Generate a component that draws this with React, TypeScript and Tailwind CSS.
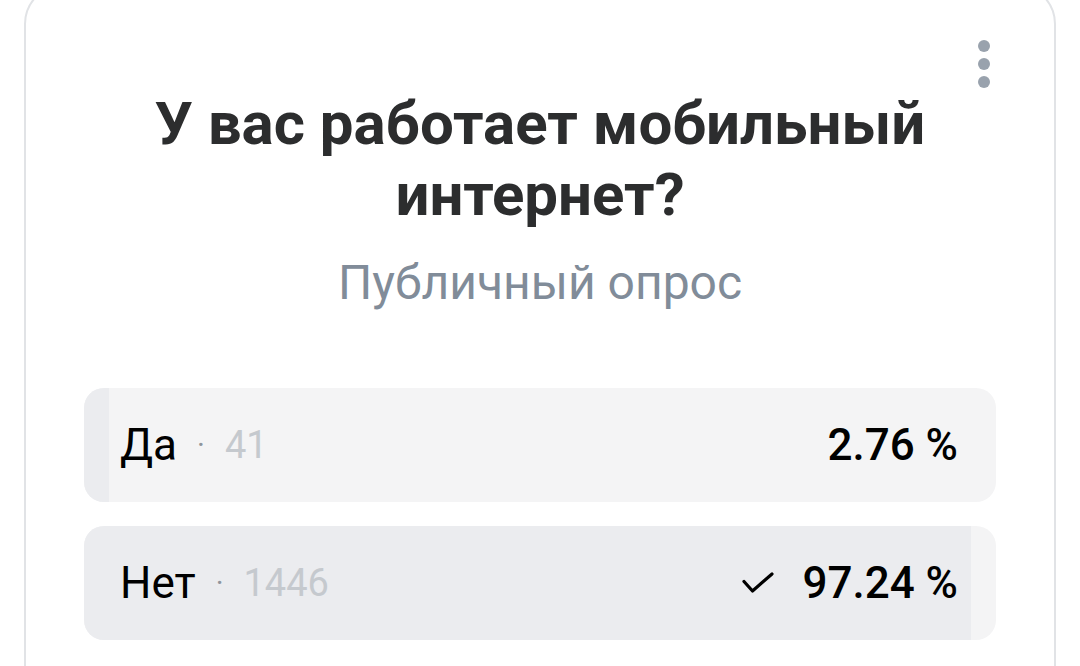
type Option = {
  label: string;
  votes: number;
  percent: number;
  chosen?: boolean;
};

const options: Option[] = [
  { label: 'Да', votes: 41, percent: 2.76 },
  { label: 'Нет', votes: 1446, percent: 97.24, chosen: true },
];

function CheckMark() {
  return (
    <svg width="32" height="22" viewBox="0 0 32 22" fill="none" className="shrink-0">
      <path d="M2 9.5 L10.5 19 L30 2" stroke="#000" strokeWidth="3.2" strokeLinecap="round" strokeLinejoin="round" />
    </svg>
  );
}

function PollOption({ option }: { option: Option }) {
  return (
    <div className="relative h-[114px] rounded-[20px] bg-[#f4f4f5] overflow-hidden">
      {/* result fill */}
      <div className="absolute inset-y-0 left-0 bg-[#ebecef]" style={{ width: `${option.percent}%` }} />
      <div className="relative h-full flex items-center justify-between pl-[36px] pr-[38px]">
        <div className="flex items-center text-[44px] leading-none">
          <span className="text-black">{option.label}</span>
          <span className="mx-[20px] text-[30px] text-[#8f959c]">·</span>
          <span className="text-[38px] text-[#c5c9ce]">{option.votes}</span>
        </div>
        <div className="flex items-center gap-[28px]">
          {option.chosen && <CheckMark />}
          <span className="text-[44px] leading-none font-medium text-black">{option.percent} %</span>
        </div>
      </div>
    </div>
  );
}

export default function App() {
  return (
    <div className="h-[666px] overflow-hidden bg-white px-[24px] font-['Roboto',sans-serif]">
      <div className="relative mt-[-16px] rounded-[40px] border-2 border-[#e1e3e6] px-[58px] pt-[102px] pb-[80px]">
        {/* Menu dots */}
        <button className="absolute top-[54px] right-[64px]">
          <div className="flex flex-col items-center gap-[6px]">
            <span className="w-[12px] h-[12px] rounded-full bg-[#99a2ad]" />
            <span className="w-[12px] h-[12px] rounded-full bg-[#99a2ad]" />
            <span className="w-[12px] h-[12px] rounded-full bg-[#99a2ad]" />
          </div>
        </button>

        <h1 className="text-center text-[60px] leading-[71px] font-bold text-[#2c2d2e] px-[30px]">
          У вас работает мобильный интернет?
        </h1>
        <p className="mt-[25px] text-center text-[48px] leading-[56px] text-[#818c99]">Публичный опрос</p>

        <div className="mt-[77px] flex flex-col gap-[24px]">
          {options.map((o) => (
            <PollOption key={o.label} option={o} />
          ))}
        </div>
      </div>
    </div>
  );
}
